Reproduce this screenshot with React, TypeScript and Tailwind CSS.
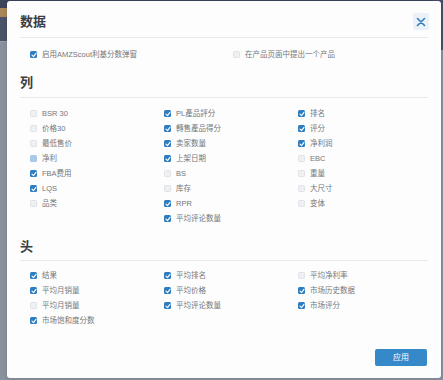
import React from "react";

type Item = { label: string; state: "on" | "off" | "semi" };

const Box = ({ state }: { state: Item["state"] }) => {
  if (state === "on")
    return (
      <span className="flex h-[7px] w-[7px] shrink-0 items-center justify-center rounded-[1.5px] bg-[#2f7dc1]">
        <svg width="6" height="6" viewBox="0 0 6 6">
          <path d="M1 3.2 L2.5 4.6 L5 1.3" stroke="#fff" strokeWidth="1.1" fill="none" strokeLinecap="round" strokeLinejoin="round" />
        </svg>
      </span>
    );
  if (state === "semi")
    return <span className="h-[7px] w-[7px] shrink-0 rounded-[1.5px] bg-[#a8cae7]" />;
  return <span className="h-[7px] w-[7px] shrink-0 rounded-[1.5px] border border-[#dfe2e6] bg-[#eef0f2]" />;
};

const Row = ({ item }: { item: Item }) => (
  <div className="flex h-[15px] items-center gap-[5px]">
    <Box state={item.state} />
    <span className="text-[7.5px] leading-none text-[#73777c]">{item.label}</span>
  </div>
);

const col1: Item[] = [
  { label: "BSR 30", state: "off" },
  { label: "价格30", state: "off" },
  { label: "最低售价", state: "off" },
  { label: "净利", state: "semi" },
  { label: "FBA费用", state: "on" },
  { label: "LQS", state: "on" },
  { label: "品类", state: "off" },
];
const col2: Item[] = [
  { label: "PL產品評分", state: "on" },
  { label: "轉售產品得分", state: "on" },
  { label: "卖家数量", state: "on" },
  { label: "上架日期", state: "on" },
  { label: "BS", state: "off" },
  { label: "库存", state: "off" },
  { label: "RPR", state: "on" },
  { label: "平均评论数量", state: "on" },
];
const col3: Item[] = [
  { label: "排名", state: "on" },
  { label: "评分", state: "on" },
  { label: "净利润", state: "on" },
  { label: "EBC", state: "off" },
  { label: "重量", state: "off" },
  { label: "大尺寸", state: "off" },
  { label: "变体", state: "off" },
];

const h1: Item[] = [
  { label: "结果", state: "on" },
  { label: "平均月销量", state: "on" },
  { label: "平均月销量", state: "off" },
  { label: "市场饱和度分数", state: "on" },
];
const h2: Item[] = [
  { label: "平均排名", state: "on" },
  { label: "平均价格", state: "on" },
  { label: "平均评论数量", state: "on" },
];
const h3: Item[] = [
  { label: "平均净利率", state: "off" },
  { label: "市场历史数据", state: "on" },
  { label: "市场评分", state: "on" },
];

const Col = ({ items }: { items: Item[] }) => (
  <div className="flex flex-col">
    {items.map((it, i) => (
      <Row key={i} item={it} />
    ))}
  </div>
);

export default function App() {
  return (
    <div
      className="relative h-[380px] w-[443px] overflow-hidden bg-[#8a919e]"
      style={{ fontFamily: '"Liberation Sans", "Noto Sans CJK SC", sans-serif' }}
    >
      {/* dimmed background page */}
      <div className="flex flex-col">
        <div className="h-[8px] bg-[#3c465a]" />
        <div className="h-[9px] w-[20px] bg-[#a98758]" />
        <div className="h-[24px] bg-[#4a5468]" />
        <div className="h-px bg-[#9aa1ad]" />
      </div>
      <div className="absolute right-0 top-0 h-[50px] w-[10px] bg-[#46506a]" />

      {/* modal */}
      <div className="absolute left-[7px] top-[1px] flex h-[377px] w-[434px] flex-col rounded-[3px] bg-[#fdfdfd] px-[13px] pt-[12px] shadow-[0_0_4px_rgba(0,0,0,0.15)]">
        <div className="flex h-[17px] items-center justify-between">
          <span className="text-[13px] font-bold leading-none text-[#3a3d42]">数据</span>
          <button className="mr-[-1px] flex h-[17px] w-[16px] items-center justify-center rounded-[2px] bg-[#eaf1f8]">
            <svg width="10" height="10" viewBox="0 0 10 10">
              <path d="M1.5 1.5 L8.5 8.5 M8.5 1.5 L1.5 8.5" stroke="#2f7dc1" strokeWidth="1.6" strokeLinecap="round" />
            </svg>
          </button>
        </div>
        <div className="mt-[7px] h-px bg-[#e6e9ed]" />

        <div className="ml-[10px] mt-[9px] grid grid-cols-[203px_1fr]">
          <Row item={{ label: "启用AMZScout利基分数弹窗", state: "on" }} />
          <Row item={{ label: "在产品页面中提出一个产品", state: "off" }} />
        </div>

        <div className="mt-[12px] flex h-[16px] items-center text-[13px] font-bold leading-none text-[#3a3d42]">列</div>
        <div className="mt-[7px] h-px bg-[#e6e9ed]" />

        <div className="ml-[10px] mt-[8px] grid grid-cols-[134px_134px_1fr]">
          <Col items={col1} />
          <Col items={col2} />
          <Col items={col3} />
        </div>

        <div className="mt-[12px] flex h-[16px] items-center text-[13px] font-bold leading-none text-[#3a3d42]">头</div>
        <div className="mt-[6px] h-px bg-[#e6e9ed]" />

        <div className="ml-[10px] mt-[7px] grid grid-cols-[134px_134px_1fr]">
          <Col items={h1} />
          <Col items={h2} />
          <Col items={h3} />
        </div>

        <div className="mt-[21px] flex justify-end">
          <button className="mr-[1px] flex h-[17px] w-[52px] items-center justify-center rounded-[2px] bg-[#3589c9] text-[8px] leading-none text-white">
            应用
          </button>
        </div>
      </div>
    </div>
  );
}
